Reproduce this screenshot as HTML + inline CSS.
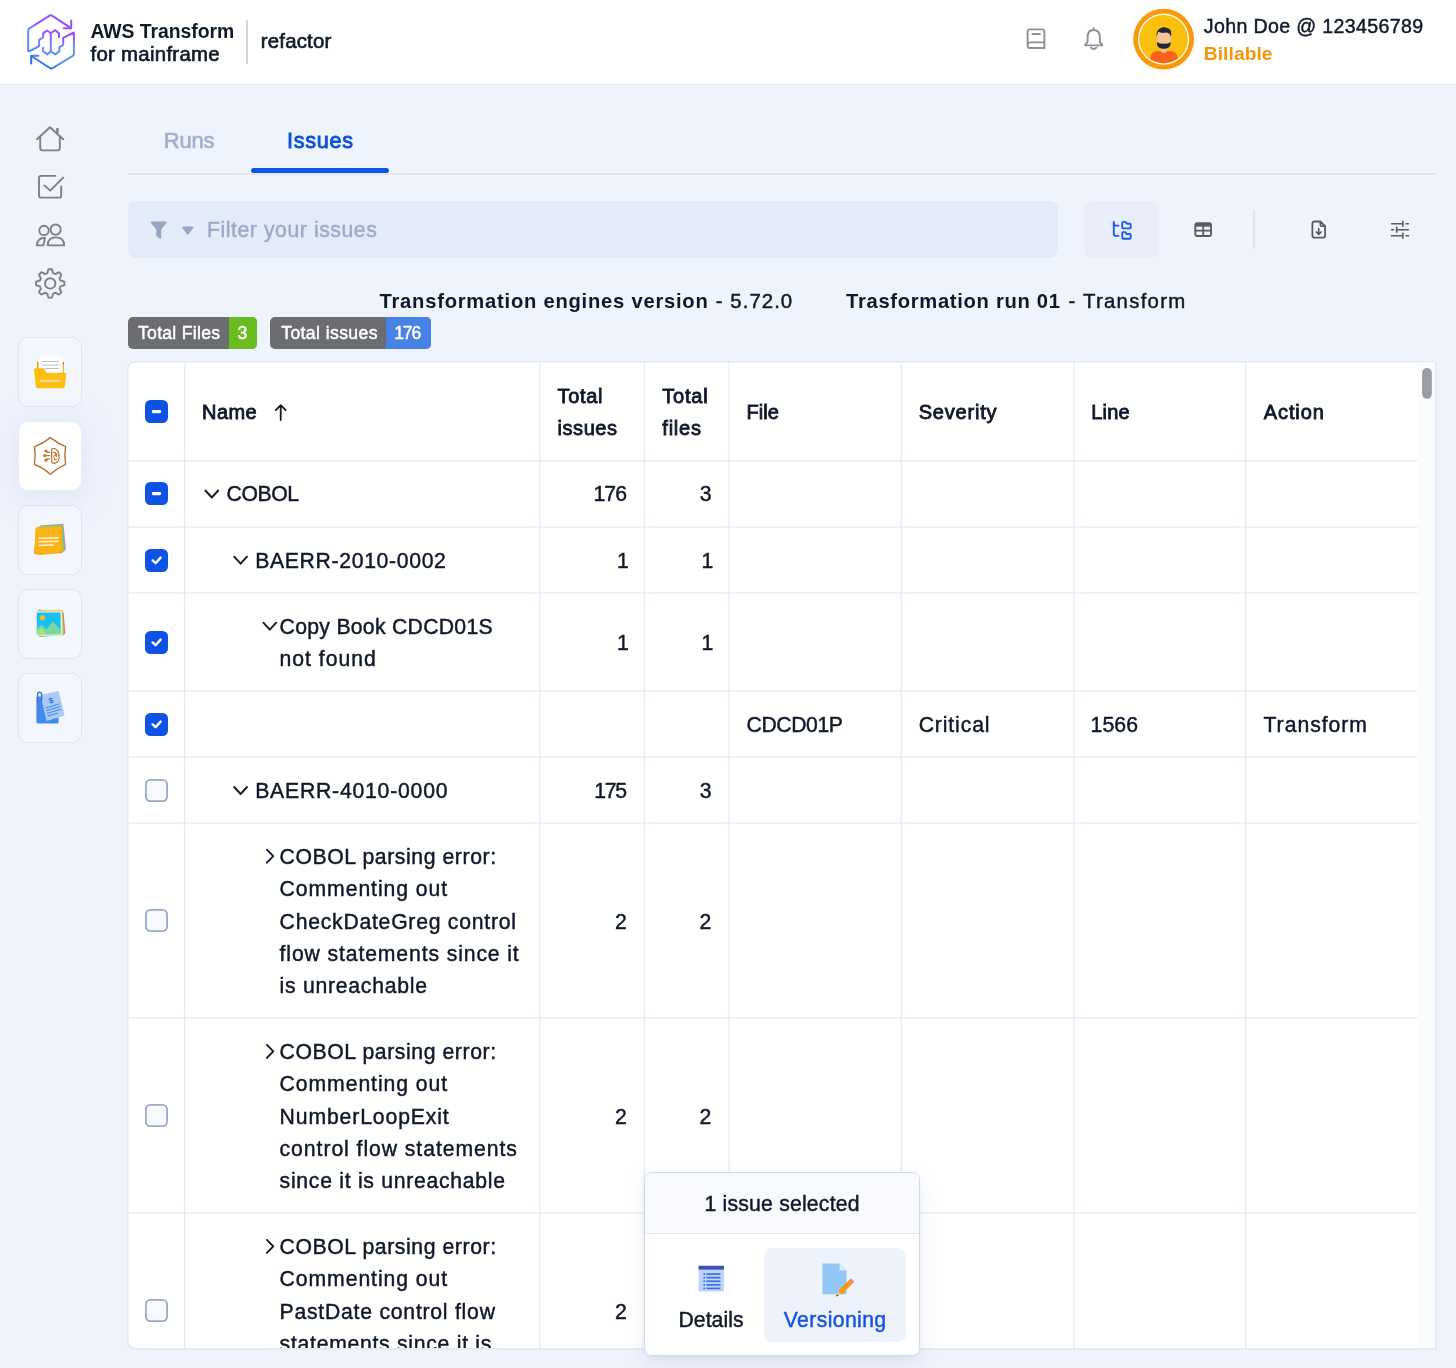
<!DOCTYPE html>
<html lang="en">
<head>
<meta charset="utf-8">
<title>AWS Transform for mainframe - refactor</title>
<style>
html,body{margin:0;padding:0;}
body{width:1456px;height:1368px;position:relative;overflow:hidden;background:#eff3fc;
 font-family:"Liberation Sans",Arial,sans-serif;color:#10192b;}
.a{position:absolute;}
.tx{position:absolute;white-space:nowrap;line-height:32px;height:32px;-webkit-text-stroke:0.45px currentColor;}
.tx.b{-webkit-text-stroke:0;}
.tx.sb{-webkit-text-stroke:0.85px currentColor;}
.tx.md{-webkit-text-stroke:0.65px currentColor;}
#header{left:0;top:0;width:1456px;height:84px;background:#fff;border-bottom:1px solid #e3e9f5;}
.card{position:absolute;left:18.2px;width:61.6px;height:68.2px;border:1px solid #dbe4f6;border-radius:10px;background:#f3f6fc;}
.card.act{background:#fff;border-color:#e9edf6;box-shadow:0 4px 24px 4px rgba(200,212,238,.34);}
.card svg{position:absolute;left:13.8px;top:16.8px;}
.cb{position:absolute;width:23px;height:23px;border-radius:5.5px;background:#0f52e6;}
.cb.off{background:#f7f9fc;box-shadow:inset 0 0 0 1.8px #9ba9c9;}
.cb svg{position:absolute;left:0;top:0;}
.gl{will-change:transform;}
#clip{left:0;top:0;width:1456px;height:1348.1px;overflow:hidden;}
#pop{left:644px;top:1172px;width:274px;height:182px;border:1px solid #d0d9eb;border-radius:7.5px;background:#fff;overflow:hidden;
 box-shadow:0 8px 22px rgba(70,90,140,.10),0 2px 6px rgba(70,90,140,.05);}
#pop .hd{position:absolute;left:0;top:0;width:274px;height:60px;background:#f7f9fd;border-bottom:1px solid #dfe5f2;}
#pop .sel{position:absolute;left:119px;top:75px;width:142px;height:94px;border-radius:8px;background:#eef2fb;}
</style>
</head>
<body>
<div id="header" class="a"></div>
<svg class="a" style="left:20px;top:8px" width="64" height="68" viewBox="20 8 64 68" fill="none" stroke-linecap="round" stroke-linejoin="round">
 <defs>
  <radialGradient id="lg" gradientUnits="userSpaceOnUse" cx="66" cy="8" r="66">
   <stop offset="0" stop-color="#a04bff"/><stop offset=".5" stop-color="#9354ff"/><stop offset=".59" stop-color="#6e8ef6"/><stop offset=".84" stop-color="#5a8df3"/><stop offset=".93" stop-color="#2a6fee"/><stop offset="1" stop-color="#1c6bf0"/>
  </radialGradient>
 </defs>
 <g stroke="url(#lg)" stroke-width="2">
  <path d="M70.6 27.8L52.4 15.8Q50.8 14.8 49.2 15.8L29.4 28.4Q28.2 29.2 28.2 30.8V50Q28.2 51.8 29.8 51L39.1 46.2V39.8L43.1 37.4V33.4L46.8 30.5L50.8 33V51.2"/>
  <path d="M71.2 20.6V28.3H63.8"/>
  <path d="M31.4 56L49.8 68Q51.3 69 52.8 68L72.4 56.2Q73.9 55.2 73.9 53.4V32.5L63.2 37.9V44.8L59.3 47.3V51.2L55.3 54.4L50.8 51.2L47.3 54.4L43.1 51.2V47.8"/>
  <path d="M31.2 63.6V55.8H38.5"/>
  <path d="M50.8 33L55.3 30.2L59 33.4V37.2"/>
 </g>
</svg>
<div class="a" style="left:246px;top:19.5px;width:2px;height:44px;background:#d3d6db"></div>
<svg class="a" style="left:1020px;top:22px" width="90" height="34" viewBox="1020 22 90 34" fill="none" stroke="#8c9199" stroke-width="1.9" stroke-linecap="round" stroke-linejoin="round">
 <path d="M1044.4 42.4V31.4Q1044.4 29.4 1042.4 29.4H1030Q1027.6 29.4 1027.6 31.8V45.4Q1027.6 48 1030.2 48H1044.4V42.4H1030.4Q1027.6 42.4 1027.6 45.2"/>
 <path d="M1032.4 34H1040"/>
 <path d="M1085 45.4H1102.4L1099.8 41.6V37.2Q1099.8 30 1093.7 30Q1087.6 30 1087.6 37.2V41.6Z"/>
 <path d="M1093.7 30V28.2"/>
 <path d="M1091 47.6Q1093.7 50.4 1096.4 47.6"/>
</svg>
<svg class="a" style="left:1130px;top:6px" width="68" height="68" viewBox="1130 6 68 68">
 <defs><clipPath id="avc"><circle cx="1163.6" cy="39.2" r="24"/></clipPath></defs>
 <circle cx="1163.6" cy="39.2" r="30.4" fill="#f7990b"/>
 <circle cx="1163.6" cy="39.2" r="25.6" fill="#fff6e6"/>
 <circle cx="1163.6" cy="39.2" r="24.2" fill="#fbbf0f"/>
 <g clip-path="url(#avc)">
  <path d="M1150.6 65V58Q1150.6 51.4 1157.6 51H1170.4Q1177.4 51.4 1177.4 58V65Z" fill="#f8621d"/>
  <path d="M1160.6 46H1167V51.6Q1163.8 54.6 1160.6 51.6Z" fill="#edb98a"/>
  <ellipse cx="1163.8" cy="38.4" rx="7.2" ry="9" fill="#f3c596"/>
  <path d="M1157 41.6Q1158 44 1163.8 43.6Q1169.6 44 1170.6 41.6V44Q1170 48.8 1163.8 48.8Q1157.6 48.8 1157 44Z" fill="#1f2733"/>
  <path d="M1156.8 37Q1155.6 30 1160.6 28.2Q1163 26.6 1167.4 28Q1172.4 29 1171 37Q1170 33 1166.4 32.6Q1161 33.6 1158.4 31.6Q1157.4 33.4 1156.8 37Z" fill="#1f2733"/>
 </g>
</svg>

<svg class="a" style="left:30px;top:120px" width="42" height="184" viewBox="30 120 42 184" fill="none" stroke="#7c8088" stroke-width="1.9" stroke-linecap="round" stroke-linejoin="round">
 <!-- home -->
 <path d="M37 139.2L50 127.2L63.2 139.2"/>
 <path d="M40.2 136.6V148Q40.2 150.4 42.6 150.4H57.4Q59.8 150.4 59.8 148V136.6"/>
 <path d="M57.4 128V133" stroke-width="2.4" stroke-linecap="butt"/>
 <!-- check square -->
 <path d="M55.2 175.9H41.2Q39 175.9 39 178.1V195.4Q39 197.6 41.2 197.6H59Q61.2 197.6 61.2 195.4V186.4"/>
 <path d="M44.4 185.4L50.2 190.6L63.2 177.6"/>
 <!-- users -->
 <circle cx="44" cy="230.4" r="4.7"/>
 <circle cx="55.6" cy="229.6" r="5.1"/>
 <path d="M47.6 245.4Q47.8 237.4 55.9 237.4Q64 237.4 64.2 245.4Z"/>
 <path d="M45 237.8Q37.4 238 36.8 245.4H43.4Z"/>
 <!-- gear -->
 <circle cx="50.2" cy="283.4" r="5.2"/>
 <path d="M50.20 269.20L50.76 269.21L51.31 269.24L51.87 269.30L52.29 270.22L52.62 271.24L52.87 272.26L53.08 273.20L53.48 273.32L53.87 273.46L54.26 273.61L54.64 273.77L55.01 273.96L55.38 274.15L56.18 273.63L57.09 273.09L58.04 272.60L58.99 272.25L59.42 272.60L59.84 272.97L60.24 273.36L60.63 273.76L61.00 274.18L61.35 274.61L61.00 275.56L60.51 276.51L59.97 277.42L59.45 278.22L59.64 278.59L59.83 278.96L59.99 279.34L60.14 279.73L60.28 280.12L60.40 280.52L61.34 280.73L62.36 280.98L63.38 281.31L64.30 281.73L64.36 282.29L64.39 282.84L64.40 283.40L64.39 283.96L64.36 284.51L64.30 285.07L63.38 285.49L62.36 285.82L61.34 286.07L60.40 286.28L60.28 286.68L60.14 287.07L59.99 287.46L59.83 287.84L59.64 288.21L59.45 288.58L59.97 289.38L60.51 290.29L61.00 291.24L61.35 292.19L61.00 292.62L60.63 293.04L60.24 293.44L59.84 293.83L59.42 294.20L58.99 294.55L58.04 294.20L57.09 293.71L56.18 293.17L55.38 292.65L55.01 292.84L54.64 293.03L54.26 293.19L53.87 293.34L53.48 293.48L53.08 293.60L52.87 294.54L52.62 295.56L52.29 296.58L51.87 297.50L51.31 297.56L50.76 297.59L50.20 297.60L49.64 297.59L49.09 297.56L48.53 297.50L48.11 296.58L47.78 295.56L47.53 294.54L47.32 293.60L46.92 293.48L46.53 293.34L46.14 293.19L45.76 293.03L45.39 292.84L45.02 292.65L44.22 293.17L43.31 293.71L42.36 294.20L41.41 294.55L40.98 294.20L40.56 293.83L40.16 293.44L39.77 293.04L39.40 292.62L39.05 292.19L39.40 291.24L39.89 290.29L40.43 289.38L40.95 288.58L40.76 288.21L40.57 287.84L40.41 287.46L40.26 287.07L40.12 286.68L40.00 286.28L39.06 286.07L38.04 285.82L37.02 285.49L36.10 285.07L36.04 284.51L36.01 283.96L36.00 283.40L36.01 282.84L36.04 282.29L36.10 281.73L37.02 281.31L38.04 280.98L39.06 280.73L40.00 280.52L40.12 280.12L40.26 279.73L40.41 279.34L40.57 278.96L40.76 278.59L40.95 278.22L40.43 277.42L39.89 276.51L39.40 275.56L39.05 274.61L39.40 274.18L39.77 273.76L40.16 273.36L40.56 272.97L40.98 272.60L41.41 272.25L42.36 272.60L43.31 273.09L44.22 273.63L45.02 274.15L45.39 273.96L45.76 273.77L46.14 273.61L46.53 273.46L46.92 273.32L47.32 273.20L47.53 272.26L47.78 271.24L48.11 270.22L48.53 269.30L49.09 269.24L49.64 269.21Z"/>
</svg>

<div class="card" style="top:337.2px">
 <svg width="34" height="34" viewBox="33 355 34 34">
  <rect x="36.9" y="361.8" width="1.6" height="8" fill="#f59e0b"/>
  <rect x="62" y="361.8" width="1.8" height="12" fill="#f59e0b"/>
  <rect x="62.6" y="362" width="1" height="3" fill="#f4511e"/>
  <rect x="39" y="356.6" width="23.8" height="17" rx="1" fill="#fdfdfe"/>
  <rect x="42" y="361" width="16.8" height="1" fill="#b9bec8"/>
  <rect x="42" y="364.6" width="16.8" height="1" fill="#b9bec8"/>
  <rect x="45" y="368" width="13.8" height="1" fill="#b9bec8"/>
  <path d="M34 369.4Q34 368.2 35.2 368.2H43.4Q44.4 368.2 44.8 369.2L45.6 371.8Q46 372.8 47 372.8H65Q66.3 372.8 66.2 374L64.9 386.6Q64.7 388.2 63.2 388.2H37.6Q36.1 388.2 35.9 386.6Z" fill="#fbbf0f"/>
  <rect x="40.2" y="379.8" width="20.2" height="2.2" rx=".6" fill="#f8d3a2"/>
 </svg>
</div>

<div class="card act" style="top:421.2px">
 <svg width="34" height="40" viewBox="33 436 34 40" fill="none" stroke="#b8722f" stroke-width="1.4" stroke-linecap="round" stroke-linejoin="round" style="top:13.8px">
  <path d="M50.4 437.6Q58 443.6 65.5 446.7Q64.2 455.5 65.5 464.4Q58 467.6 50.4 474.2Q42.8 467.6 34.5 464.4Q35.8 455.5 34.5 446.7Q42.8 443.6 50.4 437.6Z"/>
  <g stroke-width="1.2">
  <path d="M51.7 449.6Q51.7 448.5 52.9 448.5H54.2Q56.2 448.6 56.7 450.1Q58.5 450.7 58.4 452.5Q59.6 454.1 58.8 456Q59.8 458.1 58.6 459.8Q58.6 462 56.6 462.4Q55.6 463.6 53.6 463.2H52.9Q51.7 463.2 51.7 462.1Z"/>
  <path d="M53.2 452.7Q55.4 451.7 55.7 454Q55.4 456 53.8 456.2"/>
  <path d="M54.3 458.2Q54.6 460.2 56.4 459.6"/>
  <path d="M56.6 453.6Q57.4 455 56.4 456.6"/>
  <path d="M49.5 452.4H47.7L46.9 451.7"/>
  <path d="M49.5 455.6H45.9"/>
  <path d="M49.5 458.8H47.7L46.9 459.5"/>
  <circle cx="46" cy="451" r="1"/><circle cx="44.7" cy="455.6" r="1"/><circle cx="46" cy="460.2" r="1" fill="#b8722f"/>
  </g>
 </svg>
</div>

<div class="card" style="top:505.2px">
 <svg width="34" height="34" viewBox="33 523 34 34">
  <path d="M40 525.4L63.4 523.8L66 549.6L43 552Z" fill="#ff7a8a"/>
  <path d="M39.4 526L62.8 524.6L65.2 550.6L42 553Z" fill="#4cc9b0"/>
  <path d="M38.4 526.6L62 525.4L64.2 551.8L40 553.6Z" fill="#8ed15a"/>
  <path d="M36.6 527.6L61.8 526.6L62.8 553L40.8 554.8Q38.4 555 34 553.4Z" fill="#f59e0b"/>
  <path d="M35.6 527.6L61 526.8L62 550.4Q56 553.6 50 554.2L34.2 552.6Z" fill="#fbb317"/>
  <rect x="38.6" y="537.2" width="20.4" height="1.5" fill="#fff3d6" transform="rotate(-1.5 48 538)"/>
  <rect x="38.6" y="540.8" width="20.4" height="1.5" fill="#fff3d6" transform="rotate(-1.5 48 541)"/>
  <rect x="38.6" y="544.4" width="15" height="1.5" fill="#fff3d6" transform="rotate(-1.5 48 545)"/>
 </svg>
</div>

<div class="card" style="top:589.2px">
 <svg width="34" height="34" viewBox="33 607 34 34">
  <path d="M39 610L63.6 612.4L65.4 634L40 636.4Z" fill="#ff7043"/>
  <path d="M38 609.6L62.6 611.4L64.4 635L39 637Z" fill="#6fd68a"/>
  <path d="M37 610.8L62 609.8L63.2 634.8L38 636Z" fill="#ffc94d"/>
  <rect x="35.6" y="611.4" width="26.2" height="24" rx="1.4" fill="#eef1fb"/>
  <rect x="36.8" y="612.6" width="23.8" height="21.6" rx=".8" fill="#19c0f4"/>
  <circle cx="42.6" cy="617.8" r="2.5" fill="#fbbf24"/>
  <path d="M36.8 634.2V629L41.4 624.4L46.4 629.4L53 621.6L60.6 630V634.2Z" fill="#7ad99b"/>
  <path d="M36.8 634.2V631L40.6 627.6L47 634.2Z" fill="#a8e08a"/>
 </svg>
</div>

<div class="card" style="top:673.2px">
 <svg width="34" height="36" viewBox="33 689 34 36" style="top:14.8px">
  <rect x="36.4" y="696.4" width="22.2" height="27" rx="1.4" fill="#4489ec"/>
  <path d="M40.4 695L58.4 690.9L64.7 715.6L46.6 721Z" fill="#abcaf6"/>
  <path d="M45 700L46.6 706" stroke="none"/>
  <text x="50.8" y="703.4" font-family="Liberation Sans, sans-serif" font-size="8" font-weight="700" fill="#2f6fdf" text-anchor="middle" transform="rotate(-15 50.8 700)">$</text>
  <g stroke="#3f85ea" stroke-width="1" fill="none">
   <path d="M45.6 708L59.6 703.8"/><path d="M46.3 710.7L60.3 706.5"/><path d="M47 713.4L61 709.2"/><path d="M47.7 716.1L57.7 713.1"/>
  </g>
  <path d="M37.6 702V694.6Q37.6 692.2 39.6 692.2Q41.6 692.2 41.6 694.6V700.6" fill="none" stroke="#2f6fdf" stroke-width="1.3" stroke-linecap="round"/>
 </svg>
</div>

<div class="a" style="left:128px;top:173px;width:1308px;height:1.8px;background:#e0e5f1"></div>
<div class="a" style="left:251px;top:168px;width:138px;height:5px;border-radius:2.5px;background:#0f52e6"></div>
<div class="a" style="left:128px;top:201px;width:930px;height:57px;border-radius:8px;background:#e3eaf8"></div>
<svg class="a" style="left:146px;top:216px" width="52" height="28" viewBox="146 216 52 28" fill="#96a4c6">
 <path d="M151.6 221.4H165.8Q167.6 221.4 166.4 222.9L161.2 229.4V237.6Q161.2 239.4 159.8 238.4L157 236.4Q156.2 235.8 156.2 234.8V229.4L151 222.9Q149.8 221.4 151.6 221.4Z"/>
 <path d="M183.4 226.6H192.2Q194.4 226.6 192.9 228.3L189 233.8Q187.8 235.4 186.6 233.8L182.7 228.3Q181.2 226.6 183.4 226.6Z"/>
</svg>
<div class="a" style="left:1084px;top:201px;width:75px;height:57px;border-radius:9px;background:#e8edf9"></div>
<svg class="a" style="left:1110.6px;top:218.6px" width="22.5" height="22.5" viewBox="0 0 24 24" fill="none" stroke="#1b5ce6" stroke-width="2" stroke-linecap="round" stroke-linejoin="round">
 <path d="M20 10a1 1 0 0 0 1-1V6a1 1 0 0 0-1-1h-2.5a1 1 0 0 1-.8-.4l-.9-1.2A1 1 0 0 0 15 3h-2a1 1 0 0 0-1 1v5a1 1 0 0 0 1 1Z"/>
 <path d="M20 21a1 1 0 0 0 1-1v-3a1 1 0 0 0-1-1h-2.9a1 1 0 0 1-.88-.55l-.42-.85a1 1 0 0 0-.92-.6H13a1 1 0 0 0-1 1v5a1 1 0 0 0 1 1Z"/>
 <path d="M3 5a2 2 0 0 0 2 2h3"/>
 <path d="M3 3v13a2 2 0 0 0 2 2h3"/>
</svg>
<svg class="a" style="left:1190px;top:216px" width="230" height="28" viewBox="1190 216 230 28" fill="none" stroke="#595c63" stroke-width="1.8" stroke-linecap="round" stroke-linejoin="round">
 <!-- table icon -->
 <rect x="1195.3" y="223.2" width="15.8" height="12.8" rx="2"/>
 <path d="M1195.3 225H1211.1" stroke-width="3.4" stroke-linecap="butt"/>
 <path d="M1195.3 230.6H1211.1M1203.2 225V236"/>
 <!-- file download -->
 <path d="M1320.4 221.5H1314.6Q1312.4 221.5 1312.4 223.7V235.4Q1312.4 237.6 1314.6 237.6H1322.9Q1325.1 237.6 1325.1 235.4V226.2L1320.4 221.5V225Q1320.4 226.2 1321.6 226.2H1325.1"/>
 <path d="M1318.7 228.6V234.2M1316.3 232L1318.7 234.4L1321.1 232" stroke-width="1.7"/>
 <!-- sliders -->
 <path d="M1391.6 223.7H1402.9M1406 223.7H1408.4M1402.9 221.2V226.3" stroke-width="1.6"/>
 <path d="M1391.6 229.7H1393.6M1396.7 229.7H1408.4M1396.7 227.2V232.3" stroke-width="1.6"/>
 <path d="M1391.6 235.8H1402.9M1406 235.8H1408.4M1402.9 233.3V238.3" stroke-width="1.6"/>
</svg>
<div class="a" style="left:1253px;top:210px;width:2px;height:39px;background:#dee4f0"></div>
<!-- badges -->
<div class="a" style="left:128px;top:317px;width:129px;height:32px;border-radius:5px;background:#6c6d71;overflow:hidden">
 <div class="a" style="left:101px;top:0;width:28px;height:32px;background:#69bd1f"></div>
</div>
<div class="a" style="left:270px;top:317px;width:161px;height:32px;border-radius:5px;background:#6c6d71;overflow:hidden">
 <div class="a" style="left:116px;top:0;width:45px;height:32px;background:#4783e4"></div>
</div>

<svg class="a" style="left:120px;top:355px" width="1326" height="1004" viewBox="120 355 1326 1004">
<defs><clipPath id="tc"><path d="M136.10 362.60H1433.60Q1435.10 362.60 1435.10 364.10V1346.60Q1435.10 1348.10 1433.60 1348.10H136.10Q128.60 1348.10 128.60 1340.60V370.10Q128.60 362.60 136.10 362.60Z"/></clipPath></defs>
<path d="M136.10 361.10H1433.70Q1436.70 361.10 1436.70 364.10V1346.70Q1436.70 1349.70 1433.70 1349.70H136.10Q127.10 1349.70 127.10 1340.70V370.10Q127.10 361.10 136.10 361.10Z" fill="#e3e8f5"/>
<path d="M136.10 362.60H1433.60Q1435.10 362.60 1435.10 364.10V1346.60Q1435.10 1348.10 1433.60 1348.10H136.10Q128.60 1348.10 128.60 1340.60V370.10Q128.60 362.60 136.10 362.60Z" fill="#fff"/>
<g clip-path="url(#tc)">
<rect x="1418" y="360" width="18" height="992" fill="#fbfcfe"/>
<g fill="#e2e9f8">
<rect x="128" y="460.35" width="1289.6" height="1.2"/>
<rect x="128" y="526.35" width="1289.6" height="1.2"/>
<rect x="128" y="592.40" width="1289.6" height="1.2"/>
<rect x="128" y="690.40" width="1289.6" height="1.2"/>
<rect x="128" y="756.50" width="1289.6" height="1.2"/>
<rect x="128" y="822.40" width="1289.6" height="1.2"/>
<rect x="128" y="1017.40" width="1289.6" height="1.2"/>
<rect x="128" y="1212.40" width="1289.6" height="1.2"/>
<rect x="184.00" y="362" width="1.2" height="990"/>
<rect x="539.15" y="362" width="1.2" height="990"/>
<rect x="643.75" y="362" width="1.2" height="990"/>
<rect x="728.40" y="362" width="1.2" height="990"/>
<rect x="900.70" y="362" width="1.2" height="990"/>
<rect x="1073.30" y="362" width="1.2" height="990"/>
<rect x="1245.00" y="362" width="1.2" height="990"/>
</g>
<rect x="1422.1" y="368.1" width="9.7" height="30.7" rx="4.85" fill="#999da4"/>
</g>
<g fill="none" stroke="#10192b" stroke-width="1.9" stroke-linecap="round" stroke-linejoin="round">
<path d="M205.4 490.5L211.8 497.5L218.2 490.5"/>
<path d="M234.2 556.7L240.6 563.7L247.0 556.7"/>
<path d="M263.4 622.7L269.8 629.7L276.2 622.7"/>
<path d="M234.2 787.0L240.6 794.0L247.0 787.0"/>
<path d="M266.9 849.7L273.3 856.2L266.9 862.7"/>
<path d="M266.9 1044.9L273.3 1051.4L266.9 1057.9"/>
<path d="M266.9 1239.9L273.3 1246.4L266.9 1252.9"/>
<path d="M280.7 420V405.4M275.8 410.2L280.7 405.2L285.6 410.2" stroke-width="1.8"/>
</g></svg>
<div class="cb" style="left:145px;top:400.0px"><svg width="23" height="23"><rect x="6.8" y="10" width="9.4" height="3.2" rx="1.4" fill="#fff"/></svg></div>
<div class="cb" style="left:145px;top:482.3px"><svg width="23" height="23"><rect x="6.8" y="10" width="9.4" height="3.2" rx="1.4" fill="#fff"/></svg></div>
<div class="cb" style="left:145px;top:548.5px"><svg width="23" height="23" fill="none" stroke="#fff" stroke-width="2.4" stroke-linecap="round" stroke-linejoin="round"><path d="M7.6 11.4L10.6 14.2L15.6 8.6"/></svg></div>
<div class="cb" style="left:145px;top:630.7px"><svg width="23" height="23" fill="none" stroke="#fff" stroke-width="2.4" stroke-linecap="round" stroke-linejoin="round"><path d="M7.6 11.4L10.6 14.2L15.6 8.6"/></svg></div>
<div class="cb" style="left:145px;top:712.8px"><svg width="23" height="23" fill="none" stroke="#fff" stroke-width="2.4" stroke-linecap="round" stroke-linejoin="round"><path d="M7.6 11.4L10.6 14.2L15.6 8.6"/></svg></div>
<div class="cb off" style="left:145px;top:778.5px"></div>
<div class="cb off" style="left:145px;top:909.0px"></div>
<div class="cb off" style="left:145px;top:1104.0px"></div>
<div class="cb off" style="left:145px;top:1299.0px"></div>
<div class="a gl" style="left:0;top:0;width:1456px;height:1368px">
<span class="tx b" style="left:90.5px;top:14.8px;font-size:19.4px;font-weight:700;color:#0f1b2a;letter-spacing:-0.059px;">AWS Transform</span>
<span class="tx md" style="left:90.5px;top:37.6px;font-size:20.4px;color:#0f1b2a;letter-spacing:0.279px;">for mainframe</span>
<span class="tx md" style="left:260.8px;top:24.9px;font-size:20.4px;color:#0f1b2a;letter-spacing:0.189px;">refactor</span>
<span class="tx" style="left:1203.8px;top:10.2px;font-size:19.6px;letter-spacing:0.352px;">John Doe @ 123456789</span>
<span class="tx b" style="left:1203.8px;top:38.0px;font-size:19.2px;font-weight:700;color:#f5960a;letter-spacing:0.068px;">Billable</span>
<span class="tx md" style="left:163.8px;top:124.6px;font-size:22.0px;color:#a2afcb;letter-spacing:-0.220px;">Runs</span>
<span class="tx sb" style="left:287.0px;top:124.7px;font-size:21.6px;color:#0d4fe0;letter-spacing:0.716px;">Issues</span>
<span class="tx" style="left:207.0px;top:213.7px;font-size:21.2px;color:#9ba9c9;letter-spacing:0.568px;">Filter your issues</span>
<span class="tx b" style="left:379.5px;top:285.0px;font-size:20.2px;font-weight:700;letter-spacing:0.760px;">Transformation engines version</span>
<span class="tx" style="left:715.8px;top:284.9px;font-size:20.4px;letter-spacing:1.038px;">- 5.72.0</span>
<span class="tx b" style="left:846.0px;top:285.0px;font-size:20.2px;font-weight:700;letter-spacing:0.695px;">Trasformation run 01</span>
<span class="tx" style="left:1068.4px;top:284.9px;font-size:20.4px;letter-spacing:1.263px;">- Transform</span>
<span class="tx" style="left:138.0px;top:317.1px;font-size:17.6px;color:#ffffff;letter-spacing:0.280px;">Total Files</span>
<span class="tx" style="left:237.4px;top:317.1px;font-size:17.6px;color:#ffffff;">3</span>
<span class="tx" style="left:281.2px;top:317.1px;font-size:17.6px;color:#ffffff;letter-spacing:0.398px;">Total issues</span>
<span class="tx" style="left:394.2px;top:317.1px;font-size:17.6px;color:#ffffff;letter-spacing:-1.169px;">176</span>
<span class="tx sb" style="left:202.0px;top:395.7px;font-size:20.0px;letter-spacing:0.455px;">Name</span>
<span class="tx sb" style="left:557.6px;top:379.9px;font-size:20.0px;letter-spacing:0.648px;">Total</span>
<span class="tx sb" style="left:557.6px;top:411.9px;font-size:20.0px;letter-spacing:0.539px;">issues</span>
<span class="tx sb" style="left:662.3px;top:379.9px;font-size:20.0px;letter-spacing:0.773px;">Total</span>
<span class="tx sb" style="left:662.3px;top:411.9px;font-size:20.0px;letter-spacing:0.780px;">files</span>
<span class="tx sb" style="left:746.6px;top:395.7px;font-size:20.0px;">File</span>
<span class="tx sb" style="left:918.7px;top:395.7px;font-size:20.0px;letter-spacing:0.793px;">Severity</span>
<span class="tx sb" style="left:1091.2px;top:395.7px;font-size:20.0px;letter-spacing:0.204px;">Line</span>
<span class="tx sb" style="left:1263.7px;top:395.7px;font-size:20.0px;letter-spacing:0.926px;">Action</span>
<span class="tx" style="left:226.5px;top:478.4px;font-size:21.2px;letter-spacing:-0.391px;">COBOL</span>
<span class="tx" style="left:593.5px;top:478.4px;font-size:21.2px;letter-spacing:-0.917px;">176</span>
<span class="tx" style="left:699.7px;top:478.4px;font-size:21.2px;">3</span>
<span class="tx" style="left:255.2px;top:544.6px;font-size:21.2px;letter-spacing:0.667px;">BAERR-2010-0002</span>
<span class="tx" style="left:617.1px;top:544.6px;font-size:21.2px;">1</span>
<span class="tx" style="left:701.6px;top:544.6px;font-size:21.2px;">1</span>
<span class="tx" style="left:279.6px;top:610.6px;font-size:21.2px;letter-spacing:0.288px;">Copy Book CDCD01S</span>
<span class="tx" style="left:279.6px;top:642.9px;font-size:21.2px;letter-spacing:0.981px;">not found</span>
<span class="tx" style="left:617.1px;top:626.7px;font-size:21.2px;">1</span>
<span class="tx" style="left:701.6px;top:626.7px;font-size:21.2px;">1</span>
<span class="tx" style="left:746.6px;top:708.9px;font-size:21.2px;letter-spacing:-0.427px;">CDCD01P</span>
<span class="tx" style="left:918.7px;top:708.9px;font-size:21.2px;letter-spacing:0.871px;">Critical</span>
<span class="tx" style="left:1090.6px;top:708.9px;font-size:21.2px;letter-spacing:0.095px;">1566</span>
<span class="tx" style="left:1263.5px;top:708.9px;font-size:21.2px;letter-spacing:0.964px;">Transform</span>
<span class="tx" style="left:255.2px;top:774.9px;font-size:21.2px;letter-spacing:0.781px;">BAERR-4010-0000</span>
<span class="tx" style="left:594.3px;top:774.9px;font-size:21.2px;letter-spacing:-1.317px;">175</span>
<span class="tx" style="left:699.7px;top:774.9px;font-size:21.2px;">3</span>
<span class="tx" style="left:279.6px;top:840.9px;font-size:21.2px;letter-spacing:0.588px;">COBOL parsing error:</span>
<span class="tx" style="left:279.6px;top:873.2px;font-size:21.2px;letter-spacing:0.923px;">Commenting out</span>
<span class="tx" style="left:279.6px;top:905.5px;font-size:21.2px;letter-spacing:0.747px;">CheckDateGreg control</span>
<span class="tx" style="left:279.6px;top:937.8px;font-size:21.2px;letter-spacing:0.875px;">flow statements since it</span>
<span class="tx" style="left:279.6px;top:970.1px;font-size:21.2px;letter-spacing:0.732px;">is unreachable</span>
<span class="tx" style="left:615.0px;top:905.5px;font-size:21.2px;">2</span>
<span class="tx" style="left:699.6px;top:905.5px;font-size:21.2px;">2</span>
<span class="tx" style="left:279.6px;top:1036.1px;font-size:21.2px;letter-spacing:0.588px;">COBOL parsing error:</span>
<span class="tx" style="left:279.6px;top:1068.4px;font-size:21.2px;letter-spacing:0.923px;">Commenting out</span>
<span class="tx" style="left:279.6px;top:1100.7px;font-size:21.2px;letter-spacing:0.872px;">NumberLoopExit</span>
<span class="tx" style="left:279.6px;top:1133.0px;font-size:21.2px;letter-spacing:0.937px;">control flow statements</span>
<span class="tx" style="left:279.6px;top:1165.3px;font-size:21.2px;letter-spacing:0.717px;">since it is unreachable</span>
<span class="tx" style="left:615.0px;top:1100.7px;font-size:21.2px;">2</span>
<span class="tx" style="left:699.6px;top:1100.7px;font-size:21.2px;">2</span>
</div>
<div id="clip" class="a gl">
<span class="tx" style="left:279.6px;top:1231.1px;font-size:21.2px;letter-spacing:0.588px;">COBOL parsing error:</span>
<span class="tx" style="left:279.6px;top:1263.4px;font-size:21.2px;letter-spacing:0.923px;">Commenting out</span>
<span class="tx" style="left:279.6px;top:1295.7px;font-size:21.2px;letter-spacing:0.757px;">PastDate control flow</span>
<span class="tx" style="left:279.6px;top:1328.0px;font-size:21.2px;letter-spacing:0.721px;">statements since it is</span>
<span class="tx" style="left:615.0px;top:1295.7px;font-size:21.2px;">2</span>
</div>
<div id="pop" class="a"><div class="hd"></div><div class="sel"></div>
<svg class="a" style="left:0;top:0" width="274" height="182" viewBox="645 1173 274 182">
 <rect x="698.6" y="1265.8" width="25.4" height="25.6" fill="#bdd5f9"/>
 <rect x="698.6" y="1265.8" width="25.4" height="3.8" fill="#3f4fb4"/>
 <g fill="#3a6fe2">
  <rect x="706.4" y="1273.2" width="14" height="1.7"/><rect x="706.4" y="1276.8" width="14" height="1.7"/>
  <rect x="706.4" y="1280.4" width="14" height="1.7"/><rect x="706.4" y="1284" width="14" height="1.7"/>
  <rect x="706.4" y="1287.6" width="14" height="1.7"/>
  <rect x="703.4" y="1273.2" width="1.7" height="1.7"/><rect x="703.4" y="1276.8" width="1.7" height="1.7"/>
  <rect x="703.4" y="1280.4" width="1.7" height="1.7"/><rect x="703.4" y="1284" width="1.7" height="1.7"/>
  <rect x="703.4" y="1287.6" width="1.7" height="1.7"/>
 </g>
 <path d="M822.4 1263.4H839.6L846.6 1270.4V1294.2H822.4Z" fill="#92c6f6"/>
 <path d="M839.6 1263.4L846.6 1270.4H839.6Z" fill="#dcecfc"/>
 <g transform="rotate(45 844 1288.6)">
  <rect x="841.6" y="1276.4" width="4.8" height="3.2" rx=".8" fill="#f0848c"/>
  <rect x="841.6" y="1279.2" width="4.8" height="15.2" fill="#f59a0e"/>
  <path d="M841.6 1294.4H846.4L844 1299.4Z" fill="#f2c089"/>
  <path d="M842.9 1297.6H845.1L844 1299.8Z" fill="#3a3a3a"/>
 </g>
</svg></div>
<div class="a gl" style="left:0;top:0;width:1456px;height:1368px">
<span class="tx" style="left:704.5px;top:1187.8px;font-size:21.2px;letter-spacing:0.206px;">1 issue selected</span>
<span class="tx" style="left:678.5px;top:1303.8px;font-size:21.2px;letter-spacing:0.039px;">Details</span>
<span class="tx" style="left:783.7px;top:1303.8px;font-size:21.2px;color:#1452e0;letter-spacing:0.386px;">Versioning</span>
</div>
</body>
</html>
